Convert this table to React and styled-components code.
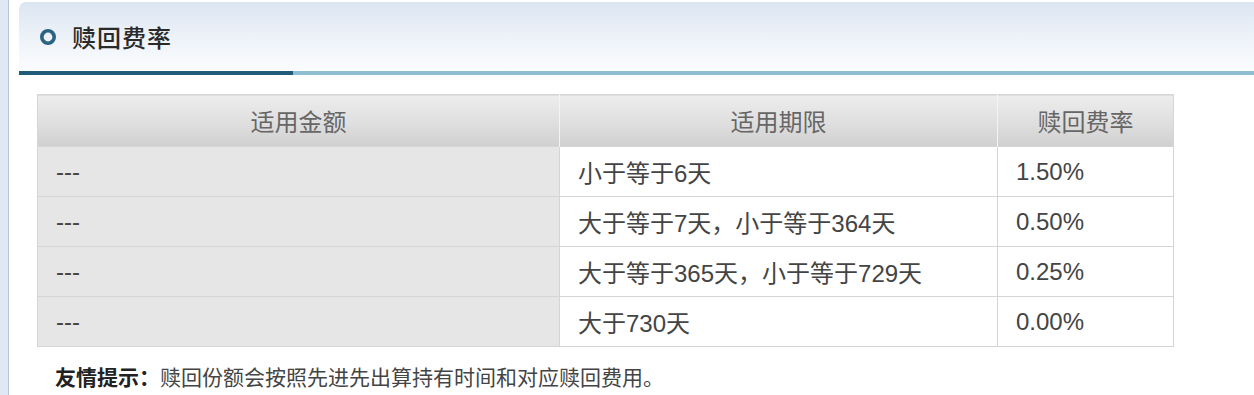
import React from 'react'
import styled, { createGlobalStyle } from 'styled-components'

const GlobalStyle = createGlobalStyle`
  html, body {
    margin: 0;
    padding: 0;
    background: #dfe8f3;
    font-family: "Liberation Sans", "Noto Sans CJK SC", sans-serif;
  }
`;

const rows = [
    { amount: '---', term: '小于等于6天', rate: '1.50%' },
    { amount: '---', term: '大于等于7天，小于等于364天', rate: '0.50%' },
    { amount: '---', term: '大于等于365天，小于等于729天', rate: '0.25%' },
    { amount: '---', term: '大于730天', rate: '0.00%' },
];

const App = () => {
    return <>
        <GlobalStyle />
        <Panel>
            <SectionHead>
                <RingIcon viewBox="0 0 18 18">
                    <circle cx="9" cy="9" r="6.2" fill="none" stroke="#2b6384" strokeWidth="3.6" />
                </RingIcon>
                <Title>赎回费率</Title>
            </SectionHead>
            <HeadBar>
                <BarDark />
                <BarLight />
            </HeadBar>

            {/* fee table */}
            <FeeTable>
                <colgroup>
                    <col style={{ width: 522 }} />
                    <col style={{ width: 438 }} />
                    <col style={{ width: 176 }} />
                </colgroup>
                <thead>
                    <tr>
                        <Th>适用金额</Th>
                        <Th>适用期限</Th>
                        <Th>赎回费率</Th>
                    </tr>
                </thead>
                <tbody>
                    {rows.map((r, i) => (
                        <tr key={i}>
                            <Td $shaded>{r.amount}</Td>
                            <Td>{r.term}</Td>
                            <Td>{r.rate}</Td>
                        </tr>
                    ))}
                </tbody>
            </FeeTable>

            <Tip>
                <strong>友情提示：</strong>赎回份额会按照先进先出算持有时间和对应赎回费用。
            </Tip>
        </Panel>
    </>
}

const Panel = styled.div`
  margin-left: 8px;
  min-height: 395px;
  box-sizing: border-box;
  background: #fff;
  border-left: 1px solid #b7c7da;
  padding: 2px 0 0 10px;
`;

const SectionHead = styled.div`
  display: flex;
  align-items: center;
  height: 69px;
  padding-left: 20px;
  border-top-left-radius: 7px;
  background: linear-gradient(to bottom, #dbe5f1 0%, #edf2f8 50%, #fbfcfe 100%);
`;

const RingIcon = styled.svg`
  width: 18px;
  height: 18px;
  margin-top: 1px;
`;

const Title = styled.h2`
  margin: 0 0 0 15px;
  font-family: "Noto Sans CJK SC", serif;
  font-size: 24px;
  font-weight: 500;
  color: #2a2a2a;
  letter-spacing: 1px;
`;

const HeadBar = styled.div`
  display: flex;
  height: 4px;
`;

const BarDark = styled.div`
  width: 274px;
  background: #1f5b7b;
`;

const BarLight = styled.div`
  flex: 1;
  background: #8fbdd3;
`;

const FeeTable = styled.table`
  margin: 19px 0 0 18px;
  width: 1136px;
  border-collapse: collapse;
  table-layout: fixed;
  border: 1px solid #d5d5d5;
`;

const Th = styled.th`
  height: 51px;
  padding: 0;
  font-size: 24px;
  font-weight: normal;
  color: #666;
  text-align: center;
  background: linear-gradient(to bottom, #ededed 0%, #e0e0e0 50%, #d0d0d0 100%);
  border-left: 1px solid #f4f4f4;
  &:first-child { border-left: none; }
`;

const Td = styled.td`
  height: 49px;
  padding: 0 18px;
  font-size: 24px;
  color: #444;
  background: ${p => p.$shaded ? '#e6e6e6' : '#fff'};
  border: 1px solid #d5d5d5;
`;

const Tip = styled.p`
  margin: 16px 0 0 36px;
  font-family: "Noto Sans CJK SC", sans-serif;
  font-size: 21px;
  color: #444;
  line-height: 26px;

  strong {
    color: #222;
  }
`;

export default App
